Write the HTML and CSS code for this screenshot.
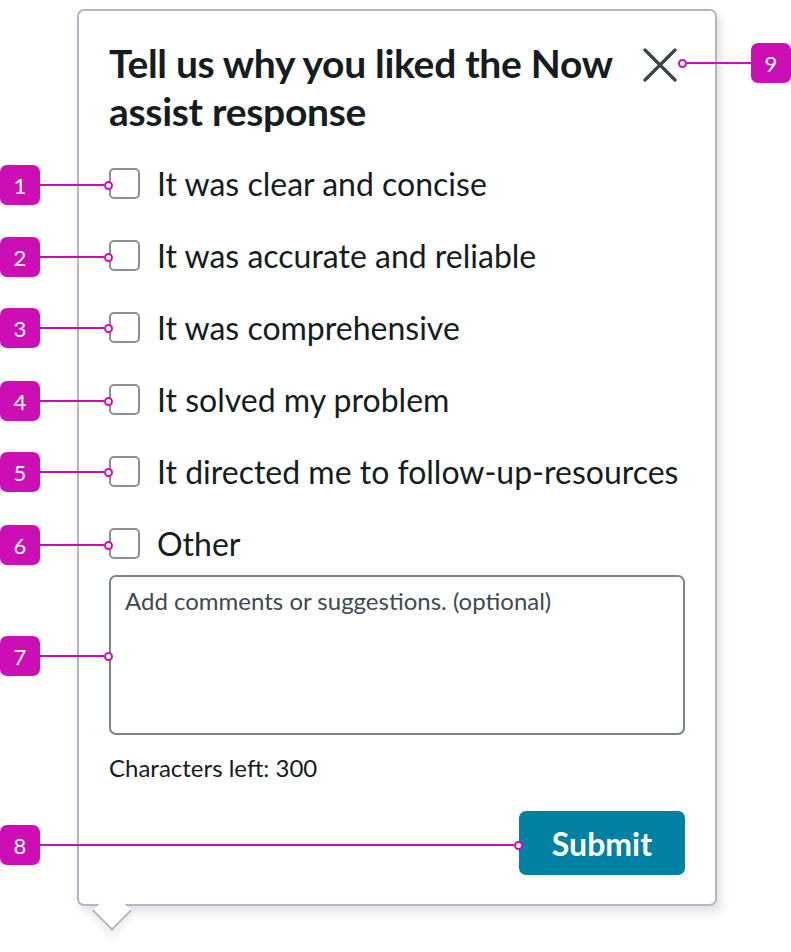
FILE: index.html
```html
<!DOCTYPE html>
<html lang="en">
<head>
<meta charset="utf-8">
<title>Feedback</title>
<link rel="stylesheet" href="styles.css">
</head>
<body>
<div class="stage">
  <div class="card">
    <div class="header">
      <h1 class="title">Tell us why you liked the Now assist response</h1>
      <button class="close" aria-label="Close">
        <svg width="34" height="34" viewBox="0 0 34 34"><path d="M2 2 L32 32 M32 2 L2 32" stroke="#39454a" stroke-width="3.2" stroke-linecap="round" fill="none"/></svg>
      </button>
    </div>
    <ul class="options">
      <li class="option"><span class="box"></span><span class="label">It was clear and concise</span></li>
      <li class="option"><span class="box"></span><span class="label">It was accurate and reliable</span></li>
      <li class="option"><span class="box"></span><span class="label">It was comprehensive</span></li>
      <li class="option"><span class="box"></span><span class="label">It solved my problem</span></li>
      <li class="option"><span class="box"></span><span class="label">It directed me to follow-up-resources</span></li>
      <li class="option"><span class="box"></span><span class="label">Other</span></li>
    </ul>
    <div class="comment">Add comments or suggestions. (optional)</div>
    <div class="counter">Characters left: 300</div>
    <div class="actions"><button class="submit">Submit</button></div>
    <div class="tail"></div>
  </div>

  <div class="anno" style="top:165px;left:0;width:109px"><span class="badge">1</span><span class="line"></span><span class="dot"></span></div>
  <div class="anno" style="top:237px;left:0;width:109px"><span class="badge">2</span><span class="line"></span><span class="dot"></span></div>
  <div class="anno" style="top:308px;left:0;width:109px"><span class="badge">3</span><span class="line"></span><span class="dot"></span></div>
  <div class="anno" style="top:381px;left:0;width:109px"><span class="badge">4</span><span class="line"></span><span class="dot"></span></div>
  <div class="anno" style="top:452px;left:0;width:109px"><span class="badge">5</span><span class="line"></span><span class="dot"></span></div>
  <div class="anno" style="top:525px;left:0;width:109px"><span class="badge">6</span><span class="line"></span><span class="dot"></span></div>
  <div class="anno" style="top:636px;left:0;width:109px"><span class="badge">7</span><span class="line"></span><span class="dot"></span></div>
  <div class="anno" style="top:825px;left:0;width:519px"><span class="badge">8</span><span class="line"></span><span class="dot"></span></div>
  <div class="anno right" style="top:43px;left:678px;width:113px"><span class="dot"></span><span class="line"></span><span class="badge">9</span></div>
</div>
</body>
</html>
```
FILE: styles.css
```css
* { box-sizing: border-box; }
html, body { margin: 0; padding: 0; background: #ffffff; }
body { font-family: Lato, "Noto Sans", sans-serif; color: #151d21; }
.stage { position: relative; width: 791px; height: 952px; padding: 9px 0 0 77px; }
.card {
  position: relative;
  width: 640px;
  height: 897px;
  border: 2px solid #b4b7c3;
  border-radius: 7px;
  background: #fff;
  box-shadow: 4px 6px 10px rgba(60, 70, 90, 0.16);
  padding: 28px 31px 0 30px;
}
.header { display: flex; justify-content: space-between; align-items: flex-start; }
.title { margin: 0; font-size: 39px; font-weight: 700; line-height: 48px; width: 530px; letter-spacing: -0.3px; }
.close { border: 0; background: none; padding: 0; margin: 9px 7px 0 0; width: 34px; height: 34px; }
.close svg { display: block; }
.options { list-style: none; margin: 33px 0 0; padding: 0; display: flex; flex-direction: column; gap: 41px; }
.option { display: flex; align-items: center; height: 31px; gap: 17px; }
.box { width: 31px; height: 31px; border: 2px solid #8b9096; border-radius: 5px; flex: none; }
.label { font-size: 32px; line-height: 31px; color: #151d21; }
.comment {
  margin-top: 16px;
  height: 160px;
  border: 2px solid #7c8689;
  border-radius: 7px;
  padding: 11px 14px;
  font-size: 24px;
  color: #3d4a50;
  line-height: 26px;
  width: 576px;
}
.counter { margin-top: 20px; font-size: 24px; line-height: 26px; color: #151d21; }
.actions { display: flex; justify-content: flex-end; margin-top: 30px; width: 576px; }
.submit {
  width: 166px; height: 64px; border: 0; border-radius: 7px;
  background: #0080a3; color: #fff; font-family: Lato, sans-serif; font-weight: 700; font-size: 32px;
}
.tail {
  position: absolute; left: 19px; bottom: -21px;
  width: 28px; height: 28px;
  background: #fff;
  border-right: 2px solid #b4b7c3; border-bottom: 2px solid #b4b7c3;
  transform: rotate(45deg);
  box-shadow: 5px 5px 8px rgba(60,70,90,0.10);
}
.anno { position: absolute; height: 40px; display: flex; align-items: center; }
.badge {
  width: 40px; height: 40px; flex: none; border-radius: 7px; background: #cc0fb4; color: #fff;
  font-size: 22px; display: flex; align-items: center; justify-content: center;
}
.line { flex: 1; height: 2px; background: #cc0fb4; }
.dot { width: 9px; height: 9px; border: 2px solid #cc0fb4; border-radius: 50%; background: #fff; flex: none; margin-right: -4px; }
.right .dot { margin-right: 0; }
```
